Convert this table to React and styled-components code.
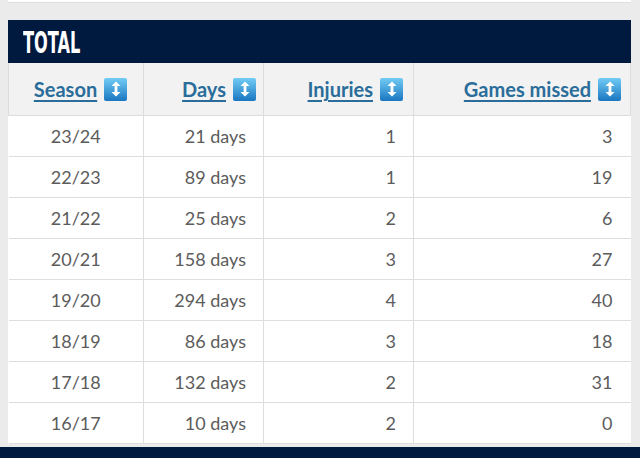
import React from "react";
import styled, { createGlobalStyle } from "styled-components";

const GlobalStyle = createGlobalStyle`
	html, body {
		margin: 0;
		padding: 0;
		background: #ebebeb;
		font-family: "Lato", "Liberation Sans", sans-serif;
	}
`;

const rows = [
	["23/24", "21 days", 1, 3],
	["22/23", "89 days", 1, 19],
	["21/22", "25 days", 2, 6],
	["20/21", "158 days", 3, 27],
	["19/20", "294 days", 4, 40],
	["18/19", "86 days", 3, 18],
	["17/18", "132 days", 2, 31],
	["16/17", "10 days", 2, 0],
];

const SortIcon = () => (
	<IconBox>
		<svg width="16" height="18" viewBox="0 0 16 18">
			<path d="M8 1.5 L3.5 6 H6.6 V12 H3.5 L8 16.5 L12.5 12 H9.4 V6 H12.5 Z" fill="#fff" />
		</svg>
	</IconBox>
);

export default function App() {
	return (
		<>
			<GlobalStyle />
			<Page>
				<TopCard />
				<Panel>
					<PanelHeader>
						<Title>TOTAL</Title>
					</PanelHeader>
					<Table>
						<colgroup>
							<col style={{ width: 135 }} />
							<col style={{ width: 120 }} />
							<col style={{ width: 150 }} />
							<col />
						</colgroup>
						<thead>
							<tr>
								<HeadCell $align="center">
									<SortLink>Season</SortLink>
									<SortIcon />
								</HeadCell>
								<HeadCell>
									<SortLink>Days</SortLink>
									<SortIcon />
								</HeadCell>
								<HeadCell $pad={10}>
									<SortLink>Injuries</SortLink>
									<SortIcon />
								</HeadCell>
								<HeadCell $pad={9}>
									<SortLink>Games missed</SortLink>
									<SortIcon />
								</HeadCell>
							</tr>
						</thead>
						<tbody>
							{rows.map(([season, days, injuries, games]) => (
								<tr key={season}>
									<Cell $align="center">{season}</Cell>
									<Cell $pad={17}>{days}</Cell>
									<Cell $pad={17}>{injuries}</Cell>
									<Cell $pad={18}>{games}</Cell>
								</tr>
							))}
						</tbody>
					</Table>
				</Panel>
			</Page>
			<Footer />
		</>
	);
}

// Styled Components

const Page = styled.div`
	padding: 0 9px 0 8px;
	display: flex;
	flex-direction: column;
	gap: 17px;
`;

const TopCard = styled.div`
	height: 2px;
	background: #fff;
	border-bottom: 1px solid #dedede;
`;

const Panel = styled.section`
	display: flex;
	flex-direction: column;
`;

const PanelHeader = styled.div`
	height: 43px;
	background: #001a3f;
	display: flex;
	align-items: center;
	padding: 0 15px;
`;

const Title = styled.h2`
	margin: 0;
	color: #fff;
	font-family: "Liberation Sans Narrow", "DejaVu Sans Condensed", "Liberation Sans", sans-serif;
	font-weight: 700;
	font-size: 31px;
	line-height: 1;
	display: inline-block;
	transform: scaleX(0.58);
	transform-origin: left center;
	padding-top: 1px;
`;

const Table = styled.table`
	width: 100%;
	border-collapse: collapse;
	table-layout: fixed;
	background: #fff;
`;

const HeadCell = styled.th`
	height: 52px;
	padding: 0 ${(p) => p.$pad || 7}px 0 ${(p) => (p.$align === "center" ? 16 : 0)}px;
	background: #f2f2f2;
	border: 1px solid #dcdcdc;
	border-top: none;
	text-align: ${(p) => p.$align || "right"};
	white-space: nowrap;
	vertical-align: middle;
`;

const SortLink = styled.a`
	color: #2a6d9a;
	font-family: "Lato", "Liberation Sans", sans-serif;
	font-weight: 700;
	font-size: 20px;
	text-decoration: underline;
	text-underline-offset: 3px;
	text-decoration-thickness: 2px;
	vertical-align: middle;
	cursor: pointer;
`;

const IconBox = styled.span`
	display: inline-flex;
	align-items: center;
	justify-content: center;
	width: 23px;
	height: 23px;
	margin-left: 7px;
	border-radius: 2px;
	background: linear-gradient(#72ccf5, #1a76c0);
	vertical-align: middle;
`;

const Cell = styled.td`
	height: 40px;
	padding: 0 ${(p) => p.$pad || 0}px 0 0;
	border: 1px solid #dedede;
	text-align: ${(p) => p.$align || "right"};
	color: #5c5c5c;
	font-size: 18px;
	vertical-align: middle;
	&:first-child {
		border-left: none;
	}
	&:last-child {
		border-right: none;
	}
`;

const Footer = styled.div`
	margin-top: 3px;
	height: 12px;
	background: #001a3f;
`;
